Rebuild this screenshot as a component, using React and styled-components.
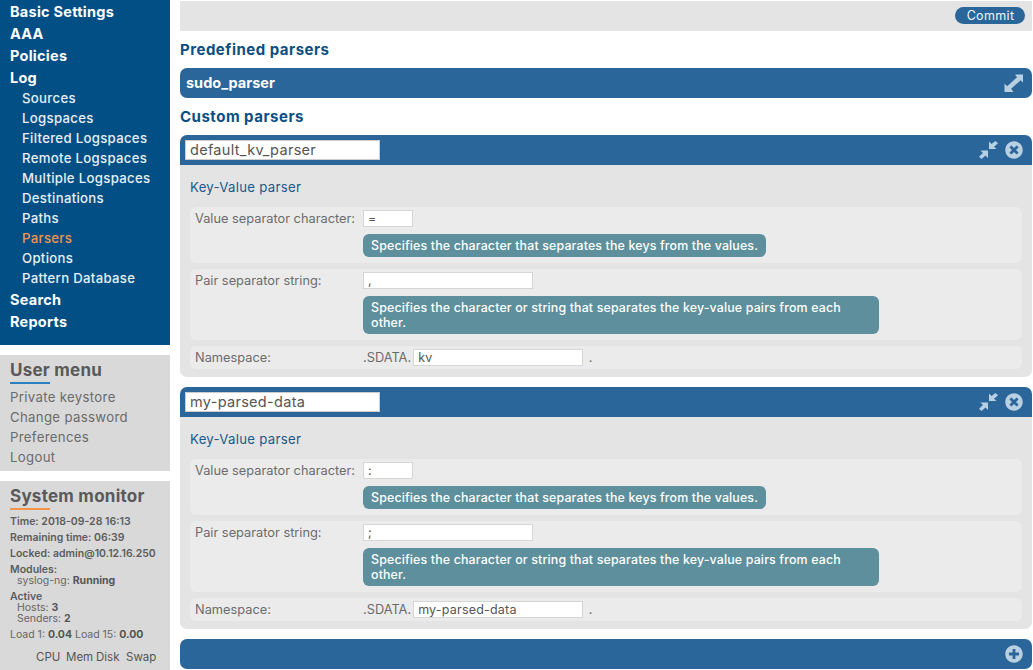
import React from "react";
import styled, { createGlobalStyle } from "styled-components";
import { FaTimesCircle, FaPlusCircle } from "react-icons/fa";

const Global = createGlobalStyle`
  html, body { margin: 0; padding: 0; height: 670px; overflow: hidden; background: #fff; }
  body { font-family: Inter, "Noto Sans", sans-serif; }
  * { box-sizing: border-box; }
`;

const Page = styled.div`
  display: flex;
  gap: 10px;
  width: 1033px;
  height: 670px;
  overflow: hidden;
`;
const Sidebar = styled.aside`
  width: 170px;
  flex: none;
  display: flex;
  flex-direction: column;
  gap: 10px;
`;
const Nav = styled.nav`
  background: #024f86;
  height: 345px;
  padding: 1px 0 0 10px;
  display: flex;
  flex-direction: column;
`;
const NavTop = styled.a`
  display: block;
  height: 22px;
  line-height: 22px;
  font-size: 14.5px;
  font-weight: 700;
  letter-spacing: 0.25px;
  color: #fff;
`;
const NavSub = styled.a`
  display: block;
  height: 20px;
  line-height: 18px;
  margin-left: 12px;
  font-size: 13.2px;
  font-weight: 500;
  letter-spacing: 0.3px;
  color: ${p => (p.$active ? "#f0954b" : "#e6eff5")};
`;
const Panel = styled.section`
  background: #d9d9d9;
  padding: 5px 10px 4px;
  color: #666;
`;
const PanelTitle = styled.h3`
  margin: 0;
  font-size: 17px;
  line-height: 20px;
  font-weight: 700;
  letter-spacing: 0.25px;
  color: #595959;
  &::after {
    content: "";
    display: block;
    width: 40px;
    height: 2px;
    margin-top: 2px;
    background: ${p => p.$accent};
  }
`;
const MenuList = styled.div`
  margin-top: 3px;
`;
const MenuLink = styled.a`
  display: block;
  height: 20px;
  line-height: 20px;
  font-size: 13.2px;
  letter-spacing: 0.33px;
  color: #6b6b6b;
`;
const MonitorPanel = styled(Panel)`
  flex: 1;
  overflow: hidden;
  padding-top: 5px;
`;
const StatList = styled.div`
  margin-top: 4px;
`;
const Stat = styled.div`
  font-size: 10.5px;
  line-height: 16px;
  font-weight: 600;
  color: #5c5c5c;
`;
const StatHead = styled.div`
  font-size: 10.5px;
  line-height: 11px;
  font-weight: 600;
  color: #5c5c5c;
  margin-top: ${p => p.$gap}px;
`;
const StatSub = styled.div`
  font-size: 10.5px;
  line-height: 11px;
  color: #666;
  padding-left: ${p => p.$indent}px;
  b { font-weight: 700; color: #555; }
`;
const Load = styled.div`
  font-size: 10.5px;
  line-height: 16px;
  margin-top: 3px;
  color: #666;
  b { font-weight: 700; color: #555; }
`;
const UsageHead = styled.div`
  display: grid;
  grid-template-columns: 26px 30px 30px 30px 30px;
  margin-top: 7px;
  font-size: 11.5px;
  line-height: 14px;
  color: #555;
  text-align: left;
`;
const UsageRow = styled.div`
  font-size: 10px;
  font-weight: 700;
  line-height: 12px;
  margin-top: 4px;
  padding-left: 2px;
  color: #555;
`;

const Main = styled.main`
  width: 852px;
  flex: none;
  padding-top: 1px;
`;
const TopBar = styled.div`
  height: 30px;
  background: #e4e4e4;
  display: flex;
  align-items: center;
  justify-content: flex-end;
  padding: 0 7px 1px 0;
`;
const Commit = styled.button`
  width: 70px;
  height: 17px;
  padding: 0 0 0 1px;
  border: 0;
  border-radius: 9px;
  background: #2a6699;
  color: #f0f5f9;
  font: 400 12.5px/17px Inter, sans-serif;
  letter-spacing: 0.35px;
`;
const SectionTitle = styled.h2`
  margin: 0;
  height: 37px;
  line-height: 38px;
  font-size: 15px;
  font-weight: 700;
  letter-spacing: 0.5px;
  color: #0b4f82;
`;
const Bar = styled.div`
  height: 30px;
  background: #2a6699;
  border-radius: ${p => (p.$open ? "7px 7px 0 0" : "7px")};
  display: flex;
  align-items: center;
  padding: 0 9px 0 5px;
  color: #b9d0e3;
`;
const BarTitle = styled.span`
  flex: 1;
  padding: 0 0 2px 1px;
  font-size: 14.5px;
  font-weight: 700;
  color: #fff;
`;
const BarSpacer = styled.span`
  flex: 1;
`;
const NameInput = styled.input`
  width: 195px;
  height: 20px;
  padding: 0 4px 2px;
  border: 1px solid #ccc;
  background: #fff;
  color: #555;
  font: 400 14.5px Inter, sans-serif;
  letter-spacing: 0.3px;
`;
const IconWrap = styled.span`
  display: inline-flex;
  margin-left: ${p => p.$gap || 0}px;
  font-size: ${p => p.$size}px;
`;
const Card = styled.div`
  margin-bottom: 10px;
`;
const CardBody = styled.div`
  background: #e4e4e4;
  border-radius: 0 0 7px 7px;
  padding: 14px 10px 8px;
`;
const Kind = styled.h4`
  margin: 0 0 12px;
  height: 16px;
  line-height: 16px;
  font-size: 13.2px;
  font-weight: 400;
  letter-spacing: 0.3px;
  color: #1a5a8c;
`;
const Rows = styled.div`
  display: flex;
  flex-direction: column;
  gap: 6px;
`;
const Row = styled.div`
  display: flex;
  min-height: 23px;
  background: #ebebeb;
  border-radius: 6px;
  padding: 3px 0 6px 5px;
  &:last-child { padding-bottom: 3px; }
`;
const Label = styled.label`
  width: 168px;
  flex: none;
  font-size: 12.8px;
  line-height: 17px;
  color: #6b6b6b;
`;
const Field = styled.div`
  display: flex;
  flex-direction: column;
  align-items: flex-start;
  gap: 7px;
`;
const TextInput = styled.input`
  width: ${p => p.$w}px;
  height: 17px;
  padding: 0 4px;
  border: 1px solid #d6d6d6;
  background: #fff;
  color: #555;
  font: 400 12.5px Inter, sans-serif;
  letter-spacing: 0.2px;
`;
const Help = styled.div`
  width: ${p => p.$w}px;
  padding: 4px 4px 4px 8px;
  background: #5d8f9c;
  border-radius: 6px;
  color: #fff;
  font-size: 12.4px;
  font-weight: 500;
  line-height: 15px;
  letter-spacing: 0.15px;
`;
const Inline = styled.div`
  display: flex;
  align-items: center;
  font-size: 12.8px;
  line-height: 17px;
  color: #6b6b6b;
  gap: 2px;
`;

const ExpandIcon = () => (
  <svg width="20" height="18" viewBox="-1.500 0 20 18" fill="currentColor">
    <path d="M10.500 0.500H19V9l-2.800-2.800L6.600 14.800 9 18H0V9.500l2.700 2.800 9.800-9.100z" />
  </svg>
);
const CompressIcon = () => (
  <svg width="19" height="18" viewBox="0 0 19 18" fill="currentColor">
    <path d="M10 0.500l2.500 2.500L16.500 0 19 2.200l-4 3.600L17.500 8H10z" />
    <path d="M9 9.500V17l-2.500-2.500L2.500 18 0 15.800l4-3.800-2.500-2.500z" />
  </svg>
);

const subs = ["Sources", "Logspaces", "Filtered Logspaces", "Remote Logspaces", "Multiple Logspaces", "Destinations", "Paths", "Parsers", "Options", "Pattern Database"];

function ParserCard({ name, valueSep, pairSep, ns }) {
  return (
    <Card>
      <Bar $open>
        <NameInput defaultValue={name} />
        <BarSpacer />
        <IconWrap $size={18}><CompressIcon /></IconWrap>
        <IconWrap $size={18} $gap={7}><FaTimesCircle /></IconWrap>
      </Bar>
      <CardBody>
        <Kind>Key-Value parser</Kind>
        <Rows>
          <Row>
            <Label>Value separator character:</Label>
            <Field>
              <TextInput $w={50} defaultValue={valueSep} />
              <Help $w={403}>Specifies the character that separates the keys from the values.</Help>
            </Field>
          </Row>
          <Row>
            <Label>Pair separator string:</Label>
            <Field>
              <TextInput $w={170} defaultValue={pairSep} />
              <Help $w={516}>Specifies the character or string that separates the key-value pairs from each other.</Help>
            </Field>
          </Row>
          <Row>
            <Label>Namespace:</Label>
            <Inline>
              .SDATA.
              <TextInput $w={170} defaultValue={ns} />
              &nbsp;.
            </Inline>
          </Row>
        </Rows>
      </CardBody>
    </Card>
  );
}

export default function App() {
  return (
    <Page>
      <Global />
      <Sidebar>
        <Nav>
          <NavTop>Basic Settings</NavTop>
          <NavTop>AAA</NavTop>
          <NavTop>Policies</NavTop>
          <NavTop>Log</NavTop>
          {subs.map(s => <NavSub key={s} $active={s === "Parsers"}>{s}</NavSub>)}
          <NavTop>Search</NavTop>
          <NavTop>Reports</NavTop>
        </Nav>
        <Panel>
          <PanelTitle $accent="#2a7fc0">User menu</PanelTitle>
          <MenuList>
            <MenuLink>Private keystore</MenuLink>
            <MenuLink>Change password</MenuLink>
            <MenuLink>Preferences</MenuLink>
            <MenuLink>Logout</MenuLink>
          </MenuList>
        </Panel>
        <MonitorPanel>
          <PanelTitle $accent="#f0954b">System monitor</PanelTitle>
          <StatList>
            <Stat>Time: 2018-09-28 16:13</Stat>
            <Stat>Remaining time: 06:39</Stat>
            <Stat>Locked: admin@10.12.16.250</Stat>
          </StatList>
          <StatHead $gap={2}>Modules:</StatHead>
          <StatSub $indent={7}>syslog-ng: <b>Running</b></StatSub>
          <StatHead $gap={5}>Active</StatHead>
          <StatSub $indent={7}>Hosts: <b>3</b></StatSub>
          <StatSub $indent={7}>Senders: <b>2</b></StatSub>
          <Load>Load 1: <b>0.04</b> Load 15: <b>0.00</b></Load>
          <UsageHead><span /><span>CPU</span><span>Mem</span><span>Disk</span><span>Swap</span></UsageHead>
          <UsageRow>100%</UsageRow>
        </MonitorPanel>
      </Sidebar>
      <Main>
        <TopBar><Commit>Commit</Commit></TopBar>
        <SectionTitle>Predefined parsers</SectionTitle>
        <Bar>
          <BarTitle>sudo_parser</BarTitle>
          <IconWrap $size={20}><ExpandIcon /></IconWrap>
        </Bar>
        <SectionTitle>Custom parsers</SectionTitle>
        <ParserCard name="default_kv_parser" valueSep="=" pairSep="," ns="kv" />
        <ParserCard name="my-parsed-data" valueSep=":" pairSep=";" ns="my-parsed-data" />
        <Bar>
          <BarSpacer />
          <IconWrap $size={18}><FaPlusCircle /></IconWrap>
        </Bar>
      </Main>
    </Page>
  );
}
